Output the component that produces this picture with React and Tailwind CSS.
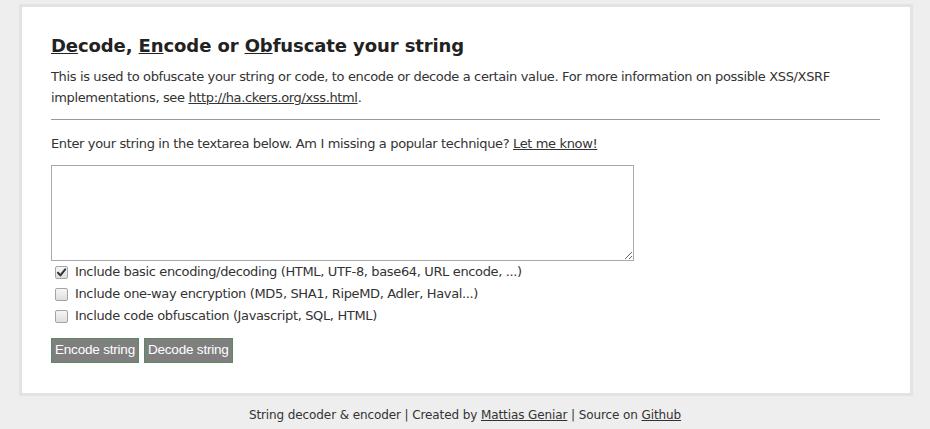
import { useState } from 'react';

function Check({ label, initial }) {
  const [on, setOn] = useState(initial);
  return (
    <label className="flex h-[22px] items-center">
      <span className="relative ml-[4px] mr-[7px] h-[13px] w-[13px]">
        <input
          type="checkbox"
          checked={on}
          onChange={(e) => setOn(e.target.checked)}
          className="block h-[13px] w-[13px] appearance-none rounded-[2px] border border-[#a4a4a4] bg-gradient-to-b from-[#f6f6f6] to-[#dedede]"
        />
        {on && (
          <svg viewBox="0 0 13 13" className="pointer-events-none absolute inset-0 h-[13px] w-[13px]">
            <path d="M3 6.8 L5.4 9.4 L10.2 3.4" fill="none" stroke="#333" strokeWidth="2" strokeLinecap="round" strokeLinejoin="round" />
          </svg>
        )}
      </span>
      <span>{label}</span>
    </label>
  );
}

export default function App() {
  const options = [
    { label: 'Include basic encoding/decoding (HTML, UTF-8, base64, URL encode, ...)', checked: true },
    { label: 'Include one-way encryption (MD5, SHA1, RipeMD, Adler, Haval...)', checked: false },
    { label: 'Include code obfuscation (Javascript, SQL, HTML)', checked: false },
  ];

  return (
    <div className="min-h-[429px] bg-[#eeeeee] pt-[4px] text-[13px] tracking-[-0.36px] text-[#333] font-['DejaVu_Sans',Verdana,sans-serif]">
      <div className="ml-[19px] w-[894px] border-[3px] border-[#e3e3e3] bg-white pl-[29px] pr-[30px] pt-[26px] pb-[30px]">
        <h1 className="text-[18px] font-bold leading-[26px] tracking-[-0.1px] text-[#222]">
          <u>De</u>code, <u>En</u>code or <u>Ob</u>fuscate your string
        </h1>
        <p className="mt-[7px] leading-[21px]">
          This is used to obfuscate your string or code, to encode or decode a certain value. For more information on possible XSS/XSRF
          implementations, see <a className="underline" href="#">http://ha.ckers.org/xss.html</a>.
        </p>
        <hr className="mt-[11px] border-t border-[#999]" />
        <p className="mt-[13px] leading-[21px]">
          Enter your string in the textarea below. Am I missing a popular technique? <a className="underline" href="#">Let me know!</a>
        </p>
        <textarea className="mt-[11px] block h-[96px] w-[583px] border border-[#a9a9a9] bg-white" />
        <div className="flex flex-col">
          {options.map((o) => (
            <Check key={o.label} label={o.label} initial={o.checked} />
          ))}
        </div>
        <div className="mt-[11px] flex gap-[5px] font-['Liberation_Sans',Arial,sans-serif] text-[13.5px] tracking-[-0.2px]">
          <button className="h-[25px] border border-[#5d8a5d] bg-[#7f7f7f] px-[3px] text-white">Encode string</button>
          <button className="h-[25px] border border-[#5d8a5d] bg-[#7f7f7f] px-[3px] text-white">Decode string</button>
        </div>
      </div>
      <p className="pt-[9px] text-center text-[12px] leading-[21px] tracking-[-0.1px]">
        String decoder &amp; encoder | Created by <a className="underline" href="#">Mattias Geniar</a> | Source on <a className="underline" href="#">Github</a>
      </p>
    </div>
  );
}
